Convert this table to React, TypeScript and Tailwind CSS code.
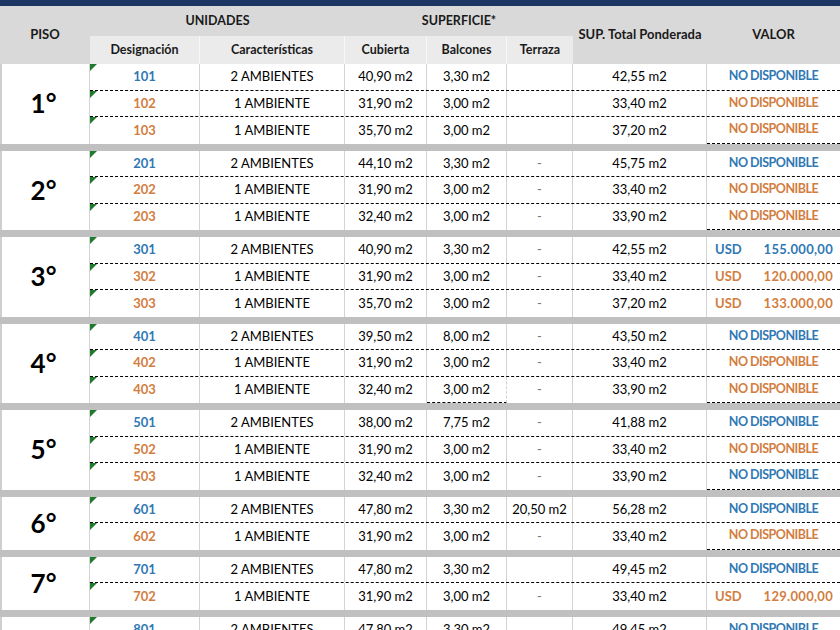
import React from 'react';

type Tone = 'blue' | 'orange';

interface Unit {
  id: string;
  tipo: string;
  cubierta: string;
  balcones: string;
  terraza: string;
  total: string;
  tone: Tone;
  valorTone: Tone;
  precio?: string;
}

interface Floor {
  label: string;
  units: Unit[];
  // which cells of the last row keep a dashed bottom edge
  lastDashed?: { balcones?: boolean; valor?: boolean };
}

const A2 = '2 AMBIENTES';
const A1 = '1 AMBIENTE';

const floors: Floor[] = [
  {
    label: '1°',
    lastDashed: { valor: true },
    units: [
      { id: '101', tipo: A2, cubierta: '40,90 m2', balcones: '3,30 m2', terraza: '', total: '42,55 m2', tone: 'blue', valorTone: 'blue' },
      { id: '102', tipo: A1, cubierta: '31,90 m2', balcones: '3,00 m2', terraza: '', total: '33,40 m2', tone: 'orange', valorTone: 'orange' },
      { id: '103', tipo: A1, cubierta: '35,70 m2', balcones: '3,00 m2', terraza: '', total: '37,20 m2', tone: 'orange', valorTone: 'orange' },
    ],
  },
  {
    label: '2°',
    lastDashed: { valor: true },
    units: [
      { id: '201', tipo: A2, cubierta: '44,10 m2', balcones: '3,30 m2', terraza: '-', total: '45,75 m2', tone: 'blue', valorTone: 'blue' },
      { id: '202', tipo: A1, cubierta: '31,90 m2', balcones: '3,00 m2', terraza: '-', total: '33,40 m2', tone: 'orange', valorTone: 'orange' },
      { id: '203', tipo: A1, cubierta: '32,40 m2', balcones: '3,00 m2', terraza: '-', total: '33,90 m2', tone: 'orange', valorTone: 'orange' },
    ],
  },
  {
    label: '3°',
    units: [
      { id: '301', tipo: A2, cubierta: '40,90 m2', balcones: '3,30 m2', terraza: '-', total: '42,55 m2', tone: 'blue', valorTone: 'blue', precio: '155.000,00' },
      { id: '302', tipo: A1, cubierta: '31,90 m2', balcones: '3,00 m2', terraza: '-', total: '33,40 m2', tone: 'orange', valorTone: 'orange', precio: '120.000,00' },
      { id: '303', tipo: A1, cubierta: '35,70 m2', balcones: '3,00 m2', terraza: '-', total: '37,20 m2', tone: 'orange', valorTone: 'orange', precio: '133.000,00' },
    ],
  },
  {
    label: '4°',
    lastDashed: { balcones: true, valor: true },
    units: [
      { id: '401', tipo: A2, cubierta: '39,50 m2', balcones: '8,00 m2', terraza: '-', total: '43,50 m2', tone: 'blue', valorTone: 'blue' },
      { id: '402', tipo: A1, cubierta: '31,90 m2', balcones: '3,00 m2', terraza: '-', total: '33,40 m2', tone: 'orange', valorTone: 'orange' },
      { id: '403', tipo: A1, cubierta: '32,40 m2', balcones: '3,00 m2', terraza: '-', total: '33,90 m2', tone: 'orange', valorTone: 'orange' },
    ],
  },
  {
    label: '5°',
    lastDashed: { valor: true },
    units: [
      { id: '501', tipo: A2, cubierta: '38,00 m2', balcones: '7,75 m2', terraza: '-', total: '41,88 m2', tone: 'blue', valorTone: 'blue' },
      { id: '502', tipo: A1, cubierta: '31,90 m2', balcones: '3,00 m2', terraza: '-', total: '33,40 m2', tone: 'orange', valorTone: 'orange' },
      { id: '503', tipo: A1, cubierta: '32,40 m2', balcones: '3,00 m2', terraza: '-', total: '33,90 m2', tone: 'orange', valorTone: 'blue' },
    ],
  },
  {
    label: '6°',
    lastDashed: { valor: true },
    units: [
      { id: '601', tipo: A2, cubierta: '47,80 m2', balcones: '3,30 m2', terraza: '20,50 m2', total: '56,28 m2', tone: 'blue', valorTone: 'blue' },
      { id: '602', tipo: A1, cubierta: '31,90 m2', balcones: '3,00 m2', terraza: '-', total: '33,40 m2', tone: 'orange', valorTone: 'orange' },
    ],
  },
  {
    label: '7°',
    units: [
      { id: '701', tipo: A2, cubierta: '47,80 m2', balcones: '3,30 m2', terraza: '', total: '49,45 m2', tone: 'blue', valorTone: 'blue' },
      { id: '702', tipo: A1, cubierta: '31,90 m2', balcones: '3,00 m2', terraza: '-', total: '33,40 m2', tone: 'orange', valorTone: 'orange', precio: '129.000,00' },
    ],
  },
  {
    label: '8°',
    units: [
      { id: '801', tipo: A2, cubierta: '47,80 m2', balcones: '3,30 m2', terraza: '', total: '49,45 m2', tone: 'blue', valorTone: 'blue' },
      { id: '802', tipo: A1, cubierta: '31,90 m2', balcones: '3,00 m2', terraza: '-', total: '33,40 m2', tone: 'orange', valorTone: 'orange' },
    ],
  },
];

const toneClass: Record<Tone, string> = {
  blue: 'text-[#2f78b4]',
  orange: 'text-[#d27d3e]',
};

// small green marker Excel puts in the corner of "number stored as text" cells
function CornerMark() {
  return (
    <svg className="absolute left-0 top-0" width="7" height="7" viewBox="0 0 7 7">
      <polygon points="0,0 7,0 0,7" fill="#1f7a2e" />
    </svg>
  );
}

function UnitRow({ unit, last, dashed }: { unit: Unit; last: boolean; dashed?: Floor['lastDashed'] }) {
  const rowLine = last ? '' : 'border-b border-dashed border-b-black';
  const balLine = last && dashed?.balcones ? 'border-b border-dashed border-b-black' : '';
  const valLine = last && dashed?.valor ? 'border-b border-dashed border-b-black' : '';
  const cell = 'flex items-center justify-center border-r border-r-[#d3d3d3] h-full';

  return (
    <div className={`flex h-[26.5px] text-[13px] text-black ${rowLine}`}>
      <div className={`${cell} relative w-[110px] font-bold ${toneClass[unit.tone]}`}>
        <CornerMark />
        {unit.id}
      </div>
      <div className={`${cell} w-[145px]`}>{unit.tipo}</div>
      <div className={`${cell} w-[82px]`}>{unit.cubierta}</div>
      <div className={`${cell} w-[80px] ${balLine}`}>{unit.balcones}</div>
      <div className={`${cell} w-[66px] ${unit.terraza === '-' ? 'text-[#777]' : ''}`}>{unit.terraza}</div>
      <div className={`${cell} w-[134px]`}>{unit.total}</div>
      <div className={`flex h-full w-[133px] items-center font-bold ${toneClass[unit.valorTone]} ${valLine}`}>
        {unit.precio ? (
          <div className="flex w-full justify-between pl-[8px] pr-[7px]">
            <span>USD</span>
            <span className="tracking-[0.3px]">{unit.precio}</span>
          </div>
        ) : (
          <div className="w-full text-center text-[12.5px] tracking-[-0.5px]">NO DISPONIBLE</div>
        )}
      </div>
    </div>
  );
}

function FloorBlock({ floor }: { floor: Floor }) {
  return (
    <div className="flex bg-white">
      <div className="flex w-[90px] items-center justify-center border-l-2 border-l-[#cfcfcf] border-r border-r-[#d3d3d3] pr-1 text-[26px] font-bold text-black">
        {floor.label}
      </div>
      <div className="flex flex-col">
        {floor.units.map((u, i) => (
          <UnitRow key={u.id} unit={u} last={i === floor.units.length - 1} dashed={floor.lastDashed} />
        ))}
      </div>
    </div>
  );
}

function Header() {
  const sub = 'flex items-center justify-center border-r border-r-[#f7f7f7] h-full';
  return (
    <div className="flex h-[58px] bg-[#d9d9d9] text-[12.5px] font-bold text-[#1a1a1a]">
      <div className="flex w-[90px] items-center justify-center text-[13px]">PISO</div>
      <div className="flex w-[483px] flex-col">
        <div className="flex h-[30px]">
          <div className="flex w-[255px] items-center justify-center">UNIDADES</div>
          <div className="flex w-[228px] items-center justify-center">SUPERFICIE*</div>
        </div>
        <div className="flex h-[28px] bg-[#ebebeb]">
          <div className={`${sub} w-[110px]`}>Designación</div>
          <div className={`${sub} w-[145px]`}>Características</div>
          <div className={`${sub} w-[82px]`}>Cubierta</div>
          <div className={`${sub} w-[80px]`}>Balcones</div>
          <div className={`${sub} w-[66px] border-r-0`}>Terraza</div>
        </div>
      </div>
      <div className="flex w-[134px] items-center justify-center text-[13px]">SUP. Total Ponderada</div>
      <div className="flex w-[133px] items-center justify-center text-[13px]">VALOR</div>
    </div>
  );
}

export default function App() {
  return (
    <div className="h-[630px] w-[840px] overflow-hidden bg-[#c0c0c0] font-['Lato','Noto_Sans',sans-serif]">
      <div className="h-[6px] bg-[#1c3563]" />
      <Header />
      <div className="flex flex-col gap-[7px]">
        {floors.map((f) => (
          <FloorBlock key={f.label} floor={f} />
        ))}
      </div>
    </div>
  );
}
